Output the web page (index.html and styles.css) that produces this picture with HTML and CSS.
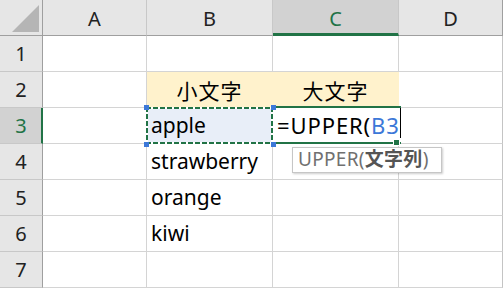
FILE: index.html
```html
<!DOCTYPE html>
<html lang="ja">
<head>
    <meta charset="UTF-8">
    <title>UPPER</title>
    <link rel="stylesheet" href="styles.css">
</head>
<body>
    <div class="sheet">
        <!-- header row -->
        <div class="cell corner"><span class="tri"></span></div>
        <div class="cell colhead">A</div>
        <div class="cell colhead">B</div>
        <div class="cell colhead active">C</div>
        <div class="cell colhead last">D</div>

        <div class="cell rowhead">1</div>
        <div class="cell"></div>
        <div class="cell"></div>
        <div class="cell"></div>
        <div class="cell last"></div>

        <div class="cell rowhead">2</div>
        <div class="cell"></div>
        <div class="cell fill jp">小文字</div>
        <div class="cell fill jp">大文字</div>
        <div class="cell last"></div>

        <div class="cell rowhead active">3</div>
        <div class="cell"></div>
        <div class="cell text ref">apple
            <span class="marquee">
                <i class="h tl"></i><i class="h tr"></i><i class="h bl"></i><i class="h br"></i>
            </span>
        </div>
        <div class="cell text editing">
            <span class="edit-box"><i class="fill-handle"></i></span>
            <span class="formula">=UPPER(<span class="arg">B3</span></span><span class="caret"></span>
            <div class="tip">UPPER(<b>文字列</b>)</div>
        </div>
        <div class="cell last"></div>

        <div class="cell rowhead">4</div>
        <div class="cell"></div>
        <div class="cell text">strawberry</div>
        <div class="cell"></div>
        <div class="cell last"></div>

        <div class="cell rowhead">5</div>
        <div class="cell"></div>
        <div class="cell text">orange</div>
        <div class="cell"></div>
        <div class="cell last"></div>

        <div class="cell rowhead">6</div>
        <div class="cell"></div>
        <div class="cell text">kiwi</div>
        <div class="cell"></div>
        <div class="cell last"></div>

        <div class="cell rowhead">7</div>
        <div class="cell"></div>
        <div class="cell"></div>
        <div class="cell"></div>
        <div class="cell last"></div>
    </div>
</body>
</html>
```

FILE: styles.css
```css
body, html {
    margin: 0;
    background: #ffffff;
    font-family: "Noto Sans", "Noto Sans CJK JP", sans-serif;
    overflow: hidden;
}

.sheet {
    display: grid;
    grid-template-columns: 43px 104px 126px 126px 104px;
    grid-auto-rows: 36px;
    width: 503px;
}

.cell {
    box-sizing: border-box;
    border-right: 1px solid #d4d4d4;
    border-bottom: 1px solid #d4d4d4;
    position: relative;
    font-size: 21px;
    color: #000;
}

.cell.last {
    border-right-color: #c4c4c4;
}

/* headers */
.corner {
    background: #e6e6e6;
    border-right-color: #9f9f9f;
    border-bottom-color: #9f9f9f;
}
.corner .tri {
    position: absolute;
    right: 3px;
    bottom: 3px;
    width: 0;
    height: 0;
    border-left: 27px solid transparent;
    border-bottom: 27px solid #b5b5b5;
}

.colhead {
    background: #e6e6e6;
    border-right-color: #c8c8c8;
    border-bottom-color: #9f9f9f;
    display: flex;
    align-items: center;
    justify-content: center;
    font-size: 20px;
    padding-top: 1px;
    color: #222;
}
.colhead.last {
    border-right-color: #9f9f9f;
}
.colhead.active {
    background: #d2d2d2;
    color: #217346;
    border-bottom: 3px solid #217346;
    padding-top: 3px;
}

.rowhead {
    background: #e6e6e6;
    border-right-color: #9f9f9f;
    border-bottom-color: #c8c8c8;
    display: flex;
    align-items: center;
    justify-content: center;
    font-size: 20px;
    color: #222;
}
.rowhead.active {
    background: #d2d2d2;
    color: #217346;
    border-right: 2px solid #217346;
    padding-left: 1px;
}

/* cells */
.text {
    padding: 2px 0 0 4px;
    line-height: 31px;
    white-space: nowrap;
}

.fill {
    background: #fff2cc;
    border-right-color: #fff2cc;
}
.jp {
    display: flex;
    align-items: center;
    justify-content: center;
    font-size: 21px;
    letter-spacing: 1px;
}

.ref {
    background: #e8eef8;
}

.marquee {
    position: absolute;
    top: -1px;
    left: -1px;
    width: 127px;
    height: 37px;
    background:
        repeating-linear-gradient(90deg, #217346 0 5px, #fff 5px 7px) top left / 100% 2px no-repeat,
        repeating-linear-gradient(90deg, #217346 0 5px, #fff 5px 7px) bottom left / 100% 2px no-repeat,
        repeating-linear-gradient(180deg, #217346 0 5px, #fff 5px 7px) top left / 2px 100% no-repeat,
        repeating-linear-gradient(180deg, #217346 0 5px, #fff 5px 7px) top right / 2px 100% no-repeat;
    z-index: 3;
}
.h {
    position: absolute;
    width: 5px;
    height: 5px;
    background: #3c78d8;
}
.h.tl { top: -2px; left: -2px; }
.h.tr { top: -2px; right: -3px; }
.h.bl { bottom: -3px; left: -2px; }
.h.br { bottom: -3px; right: -3px; }

.editing {
    border-right-color: #fff;
    z-index: 2;
}
.edit-box {
    position: absolute;
    top: -2px;
    left: -1px;
    width: 129px;
    height: 38px;
    box-sizing: border-box;
    border-top: 2px solid #217346;
    border-bottom: 2px solid #217346;
}
.fill-handle {
    position: absolute;
    right: 1px;
    bottom: -4px;
    width: 5px;
    height: 5px;
    background: #217346;
    border: 1px solid #fff;
}
.formula {
    position: relative;
    font-size: 22px;
    letter-spacing: 0.9px;
}
.arg {
    color: #3c78d8;
}
.caret {
    display: inline-block;
    width: 1px;
    height: 30px;
    background: #000;
    vertical-align: top;
    margin-top: -2px;
    margin-left: 0;
}

.tip {
    position: absolute;
    top: 39px;
    left: 19px;
    width: 150px;
    height: 26px;
    box-sizing: border-box;
    border: 1px solid #c6c6c6;
    box-shadow: 1px 1px 2px rgba(0, 0, 0, 0.2);
    background: #fff;
    color: #707070;
    font-size: 19px;
    line-height: 23px;
    padding-left: 5px;
    letter-spacing: 0.3px;
    z-index: 4;
}
.tip b {
    color: #555;
    font-weight: bold;
}
```
